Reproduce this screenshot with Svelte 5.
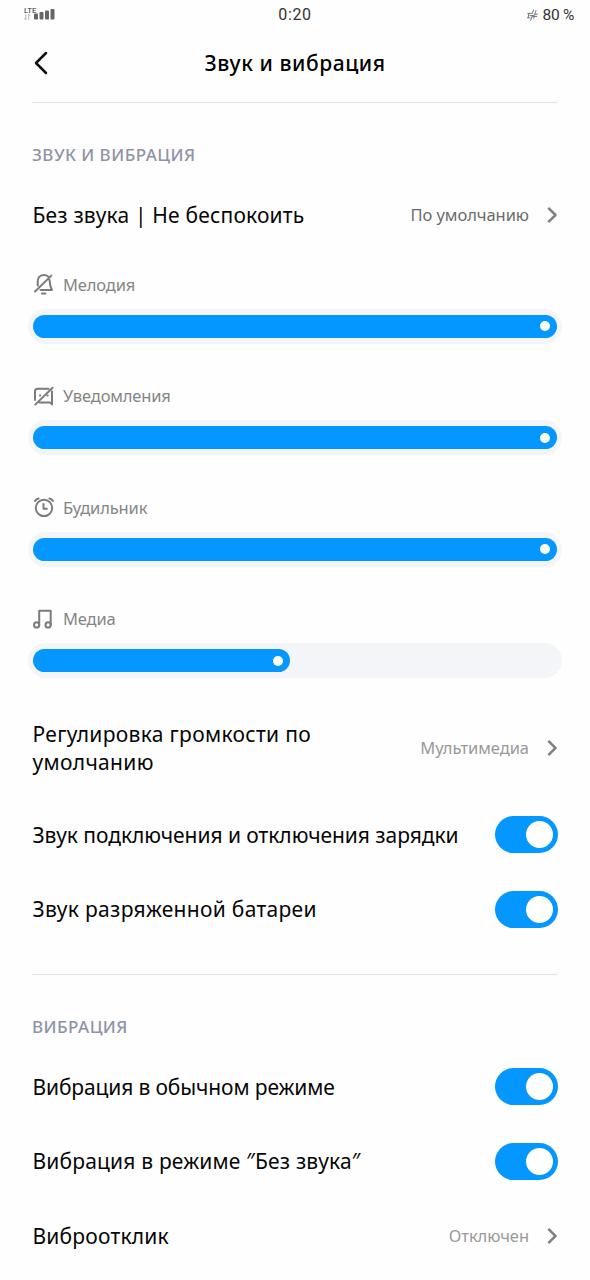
<script>
    let sliders = $state([
        { id: 'bell', label: 'Мелодия', value: 100 },
        { id: 'message', label: 'Уведомления', value: 100 },
        { id: 'alarm', label: 'Будильник', value: 100 },
        { id: 'music', label: 'Медиа', value: 49 }
    ]);

    let soundToggles = $state([
        { label: 'Звук подключения и отключения зарядки', spacing: -0.05, on: true },
        { label: 'Звук разряженной батареи', spacing: 0.3, on: true }
    ]);

    let vibrationToggles = $state([
        { label: 'Вибрация в обычном режиме', spacing: -0.13, on: true },
        { label: 'Вибрация в режиме ″Без звука″', spacing: 0.18, on: true }
    ]);
</script>

{#snippet linkRow(label, value, spacing, dark)}
    <div class="row">
        <span class="label" style={`letter-spacing:${spacing}px`}>{label}</span>
        <span class="value" class:dark>{value}</span>
        <svg class="chevron" width="12" height="18" viewBox="0 0 12 18">
            <path d="M2.3 1.8 L9.5 9 L2.3 16.2" />
        </svg>
    </div>
{/snippet}

{#snippet toggleRow(item)}
    <div class="row">
        <span class="label" style={`letter-spacing:${item.spacing}px`}>{item.label}</span>
        <button
            class="toggle"
            class:on={item.on}
            role="switch"
            aria-checked={item.on}
            aria-label={item.label}
            onclick={() => (item.on = !item.on)}
        ><span class="knob"></span></button>
    </div>
{/snippet}

<div class="screen">
    <div class="status">
        <div class="signal">
            <div class="network">
                <span class="lte">LTE</span>
                <svg width="7" height="6" viewBox="0 0 7 6">
                    <path d="M1.8 0.5 V5.5 M0.6 4.3 L1.8 5.5 M4.7 5.5 V0.5 M4.7 0.5 L6 1.8" />
                </svg>
            </div>
            <svg class="bars" width="21" height="11" viewBox="0 0 21 11">
                <rect x="0" y="4.5" width="4" height="6" rx="1" />
                <rect x="5.5" y="3" width="4" height="7.5" rx="1" />
                <rect x="11" y="1.5" width="4" height="9" rx="1" />
                <rect x="16.5" y="0" width="4" height="10.5" rx="1" />
            </svg>
        </div>
        <span class="clock">0:20</span>
        <div class="battery">
            <svg width="11" height="12" viewBox="0 0 11 12">
                <path d="M0.8 4.4 H5.4 L6.6 0.8 M3 6.6 H7.2 L9 1.6 M0.8 8.8 H2.8 M3.6 11.4 L5 7.4 H9.8 M6.8 9.4 L7.4 7.4 M8.4 5.2 H10.4 M2 4.4 L1 8.8" />
            </svg>
            <span>80 %</span>
        </div>
    </div>

    <header>
        <svg class="back" width="16" height="24" viewBox="0 0 16 24">
            <path d="M14 2 L4 12 L14 22" />
        </svg>
        <h1>Звук и вибрация</h1>
    </header>

    <hr />

    <h2>ЗВУК И ВИБРАЦИЯ</h2>
    {@render linkRow('Без звука | Не беспокоить', 'По умолчанию', 0.18, true)}

    {#each sliders as slider}
        <div class="slider">
            <div class="caption">
                <svg width="22" height="22" viewBox="0 0 22 22">
                    {#if slider.id === 'bell'}
                        <path d="M4.7 12.5 V8.5 C4.7 4.6 7.2 2 11 2 C12.6 2 14 2.5 15.1 3.4 M16.6 7 C17 9.5 16.4 12.5 19 17 H7.5 M18.4 2.6 L2 18.5 M9 20.4 H12.4" />
                    {:else if slider.id === 'message'}
                        <path d="M2 15 V6.5 Q2 3.8 4.7 3.8 H15.5 M19 6.5 V19.4 L17 17.4 H6.5 M19.6 2.8 L2.2 19.6" />
                        <path d="M6.9 10.4 H7.3 M14.3 10.4 H14.7" />
                    {:else if slider.id === 'alarm'}
                        <circle cx="11" cy="11.9" r="8.2" />
                        <path d="M10.5 7.9 V12.7 H13.8 M2 5 Q3.2 2.9 5.6 2.4 M20 5 Q18.8 2.9 16.4 2.4" />
                    {:else}
                        <circle cx="3.6" cy="16.9" r="2.6" />
                        <circle cx="15.1" cy="16.9" r="2.6" />
                        <path d="M6.2 16.9 V2.7 H17.7 V16.9" />
                    {/if}
                </svg>
                <span>{slider.label}</span>
            </div>
            <div class="track">
                <div class="fill" style={`width:${slider.value}%`}><span class="dot"></span></div>
            </div>
        </div>
    {/each}

    <div class="tall">
        {@render linkRow('Регулировка громкости по умолчанию', 'Мультимедиа', 0.32, false)}
    </div>

    {#each soundToggles as item}
        {@render toggleRow(item)}
    {/each}

    <hr class="spaced" />

    <h2>ВИБРАЦИЯ</h2>
    {#each vibrationToggles as item}
        {@render toggleRow(item)}
    {/each}
    {@render linkRow('Виброотклик', 'Отключен', 0.2, false)}
</div>

<style>
    :global(body) {
        background: #fefefe;
    }

    .screen {
        box-sizing: border-box;
        width: 590px;
        height: 1280px;
        padding: 0 32px;
        overflow: hidden;
        background: #fefefe;
        color: #060606;
        font-family: 'Noto Sans', sans-serif;
    }

    svg {
        flex-shrink: 0;
        fill: none;
        stroke: #7b7b7b;
        stroke-width: 2;
        stroke-linecap: round;
        stroke-linejoin: round;
    }

    .status {
        display: grid;
        grid-template-columns: 1fr auto 1fr;
        align-items: center;
        height: 29px;
        margin: 0 -16px 1px -8px;
        font-family: Roboto, sans-serif;
        font-size: 15px;
        color: #333;
    }

    .signal {
        display: flex;
        align-items: flex-end;
        height: 13px;
        padding-bottom: 3px;
    }

    .network {
        display: flex;
        flex-direction: column;
        width: 10px;
    }

    .network svg {
        stroke: #aaa;
        stroke-width: 0.8;
    }

    .lte {
        font-size: 8px;
        line-height: 7px;
        white-space: nowrap;
    }

    .bars {
        fill: #666;
        stroke: none;
    }

    .clock {
        font-size: 16px;
        letter-spacing: 0.6px;
        margin-right: 8px;
    }

    .battery {
        display: flex;
        align-items: center;
        justify-content: flex-end;
        gap: 5px;
        font-size: 15.5px;
        letter-spacing: -0.3px;
    }

    .battery svg {
        stroke: #666;
        stroke-width: 0.9;
    }

    header {
        display: grid;
        grid-template-columns: 16px 1fr 16px;
        align-items: center;
        height: 65px;
        margin-bottom: 7px;
    }

    .back {
        stroke: #111;
        stroke-width: 2.5;
    }

    h1 {
        margin: 0;
        text-align: center;
        font-size: 21px;
        font-weight: 500;
        letter-spacing: 0.55px;
        color: #000;
    }

    hr {
        height: 1px;
        margin: 0;
        border: none;
        background: #e3e3e3;
    }

    hr.spaced {
        margin-top: 27px;
    }

    h2 {
        margin: 0;
        padding-top: 28px;
        height: 47px;
        line-height: 47px;
        font-size: 17px;
        font-weight: 500;
        letter-spacing: 0.45px;
        color: #8f93a8;
    }

    .row {
        display: flex;
        align-items: center;
        height: 74.5px;
    }

    .tall .row {
        height: 99px;
    }

    .label {
        flex: 1;
        padding-left: 0.5px;
        font-size: 21px;
        line-height: 28px;
    }

    .tall .label {
        padding-right: 90px;
    }

    .value {
        padding-bottom: 1px;
        font-size: 16.5px;
        letter-spacing: -0.05px;
        color: #999;
        white-space: nowrap;
    }

    .value.dark {
        color: #6b6b6b;
    }

    .chevron {
        margin-left: 17px;
        stroke: #808080;
        stroke-width: 2.5;
        stroke-linecap: butt;
    }

    .slider {
        box-sizing: border-box;
        height: 111.5px;
        padding-top: 19px;
    }

    .caption {
        display: flex;
        align-items: center;
        gap: 8px;
        height: 25px;
        margin: 0 0 12px 1px;
        font-size: 16.5px;
        letter-spacing: -0.15px;
        color: #858585;
    }

    .track {
        box-sizing: border-box;
        height: 35px;
        margin: 0 -4px;
        padding: 6px 5px;
        border-radius: 18px;
        background: #f4f5f9;
    }

    .fill {
        display: flex;
        align-items: center;
        justify-content: flex-end;
        box-sizing: border-box;
        height: 23px;
        padding-right: 7px;
        border-radius: 12px;
        background: #0397ff;
    }

    .dot {
        width: 10px;
        height: 10px;
        border-radius: 50%;
        background: #fff;
    }

    .toggle {
        display: flex;
        align-items: center;
        flex-shrink: 0;
        width: 63px;
        height: 37px;
        padding: 0 5px;
        border: none;
        border-radius: 19px;
        background: #e4e4e4;
    }

    .toggle.on {
        justify-content: flex-end;
        background: #0397ff;
    }

    .knob {
        width: 27px;
        height: 27px;
        border-radius: 50%;
        background: #fff;
    }
</style>
